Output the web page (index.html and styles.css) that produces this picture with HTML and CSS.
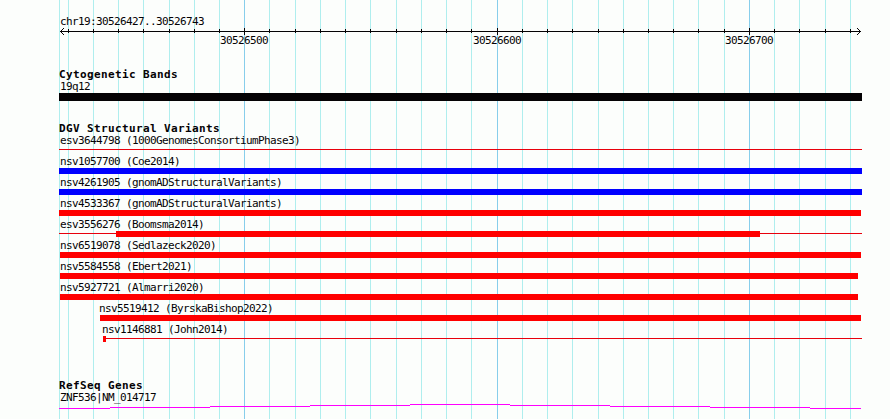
FILE: index.html
```html
<!DOCTYPE html>
<html lang="en">
<head>
<meta charset="utf-8">
<title>chr19:30526427..30526743</title>
<link rel="stylesheet" href="styles.css">
</head>
<body>
<main class="browser">
  <svg class="grid" width="890" height="419" shape-rendering="crispEdges" aria-hidden="true">
    <path class="minor" d="M59.500 0v419M68.500 0v419M93.500 0v419M118.500 0v419M143.500 0v419M169.500 0v419M194.500 0v419M219.500 0v419M269.500 0v419M295.500 0v419M320.500 0v419M345.500 0v419M370.500 0v419M396.500 0v419M421.500 0v419M446.500 0v419M471.500 0v419M522.500 0v419M547.500 0v419M572.500 0v419M598.500 0v419M623.500 0v419M648.500 0v419M673.500 0v419M698.500 0v419M724.500 0v419M774.500 0v419M799.500 0v419M825.500 0v419M850.500 0v419"/>
    <path class="major" d="M244.500 0v419M497.500 0v419M749.500 0v419"/>
  </svg>

  <header class="ruler">
    <div class="label range">chr19:30526427..30526743</div>
    <svg class="scale" width="803" height="8" shape-rendering="crispEdges" aria-hidden="true">
      <path d="M1 3.500h801M9.500 1v4M34.500 1v4M59.500 1v4M84.500 1v4M110.500 1v4M135.500 1v4M160.500 1v4M185.500 0v7M210.500 1v4M236.500 1v4M261.500 1v4M286.500 1v4M311.500 1v4M337.500 1v4M362.500 1v4M387.500 1v4M412.500 1v4M438.500 0v7M463.500 1v4M488.500 1v4M513.500 1v4M539.500 1v4M564.500 1v4M589.500 1v4M614.500 1v4M639.500 1v4M665.500 1v4M690.500 0v7M715.500 1v4M740.500 1v4M766.500 1v4M791.500 1v4"/>
      <path class="head" d="M4 .5h1M3 1.500h1M2 2.500h1M2 4.500h1M3 5.500h1M4 6.500h1M798 .5h1M799 1.500h1M800 2.500h1M800 4.500h1M799 5.500h1M798 6.500h1"/>
    </svg>
    <div class="ticks label"><span>30526500</span><span>30526600</span><span>30526700</span></div>
  </header>

  <section class="track bands">
    <h2>Cytogenetic Bands</h2>
    <div class="label">19q12</div>
    <div class="band"></div>
  </section>

  <section class="track variants">
    <h2>DGV Structural Variants</h2>
    <div class="row"><div class="label">esv3644798 (1000GenomesConsortiumPhase3)</div><div class="bar thin"></div></div>
    <div class="row"><div class="label">nsv1057700 (Coe2014)</div><div class="bar gain"></div></div>
    <div class="row"><div class="label">nsv4261905 (gnomADStructuralVariants)</div><div class="bar gain"></div></div>
    <div class="row"><div class="label">nsv4533367 (gnomADStructuralVariants)</div><div class="bar loss end-1"></div></div>
    <div class="row"><div class="label">esv3556276 (Boomsma2014)</div><div class="bar thin"><div class="core boomsma"></div></div></div>
    <div class="row"><div class="label">nsv6519078 (Sedlazeck2020)</div><div class="bar loss start-1 end-1"></div></div>
    <div class="row"><div class="label">nsv5584558 (Ebert2021)</div><div class="bar loss start-1 end-4"></div></div>
    <div class="row"><div class="label">nsv5927721 (Almarri2020)</div><div class="bar loss start-1 end-4"></div></div>
    <div class="row byrska"><div class="label">nsv5519412 (ByrskaBishop2022)</div><div class="bar loss start-1 end-1"></div></div>
    <div class="row john"><div class="label">nsv1146881 (John2014)</div><div class="bar thin start-1"><div class="core point"></div></div></div>
  </section>

  <section class="track genes">
    <h2>RefSeq Genes</h2>
    <div class="label">ZNF536|NM_014717</div>
    <svg class="transcript" width="803" height="5" shape-rendering="crispEdges" aria-hidden="true">
      <path d="M0 4.500h51M51 3.500h100M151 2.500h100M251 1.500h100M351 .500h100M451 1.500h100M551 2.500h100M651 3.500h100M751 4.500h51"/>
    </svg>
  </section>
</main>
</body>
</html>
```

FILE: styles.css
```css
* { box-sizing: border-box; }

body {
  margin: 0;
  background: #fcfefc;
  color: #040204;
}

.browser {
  position: relative;
  width: 890px;
  height: 419px;
  padding: 14px 28px 0 59px;
  overflow: hidden;
  font: 11px/15px "DejaVu Sans Mono", monospace;
}

.grid {
  position: absolute;
  inset: 0;
  z-index: -1;
}

.grid path { fill: none; }
.grid .minor { stroke: #afeeee; }
.grid .major { stroke: #87ceeb; }

svg { display: block; }

.label {
  height: 15px;
  padding-left: 1px;
  letter-spacing: -0.622px;
  white-space: nowrap;
}

.range { height: 14px; }

.scale path {
  fill: none;
  stroke: #040204;
}

.ticks {
  display: grid;
  grid-template-columns: 253px 252px 1fr;
  padding-left: 161px;
  margin-top: -3px;
  height: 14px;
}

h2 {
  margin: 0;
  height: 12px;
  font-size: 11px;
  line-height: 15px;
  letter-spacing: 0.378px;
  white-space: nowrap;
}

.track { width: 803px; }

.bands { padding-top: 20px; }

.bands .label { height: 14px; }

.band {
  height: 8px;
  background: #040204;
}

.variants { padding-top: 19px; }

.variants h2,
.variants .label { line-height: 17px; }

.bar { height: 6px; }
.gain { background: #0000ff; }
.loss { background: #ff0000; }
.thin { background: linear-gradient(#e8000c, #e8000c) 0 2px / 100% 1px no-repeat; }
.start-1 { margin-left: 1px; }
.end-1 { margin-right: 1px; }
.end-4 { margin-right: 4px; }

.core {
  height: 6px;
  background: #ff0000;
}

.boomsma {
  width: 644px;
  margin-left: 57px;
}

.point { width: 3px; }
.byrska { padding-left: 40px; }
.john { padding-left: 43px; }
.byrska .label, .john .label { padding-left: 0; }

.genes { padding-top: 36px; }

.transcript { margin-top: -1px; }

.transcript path {
  fill: none;
  stroke: #ff00ff;
}
```
